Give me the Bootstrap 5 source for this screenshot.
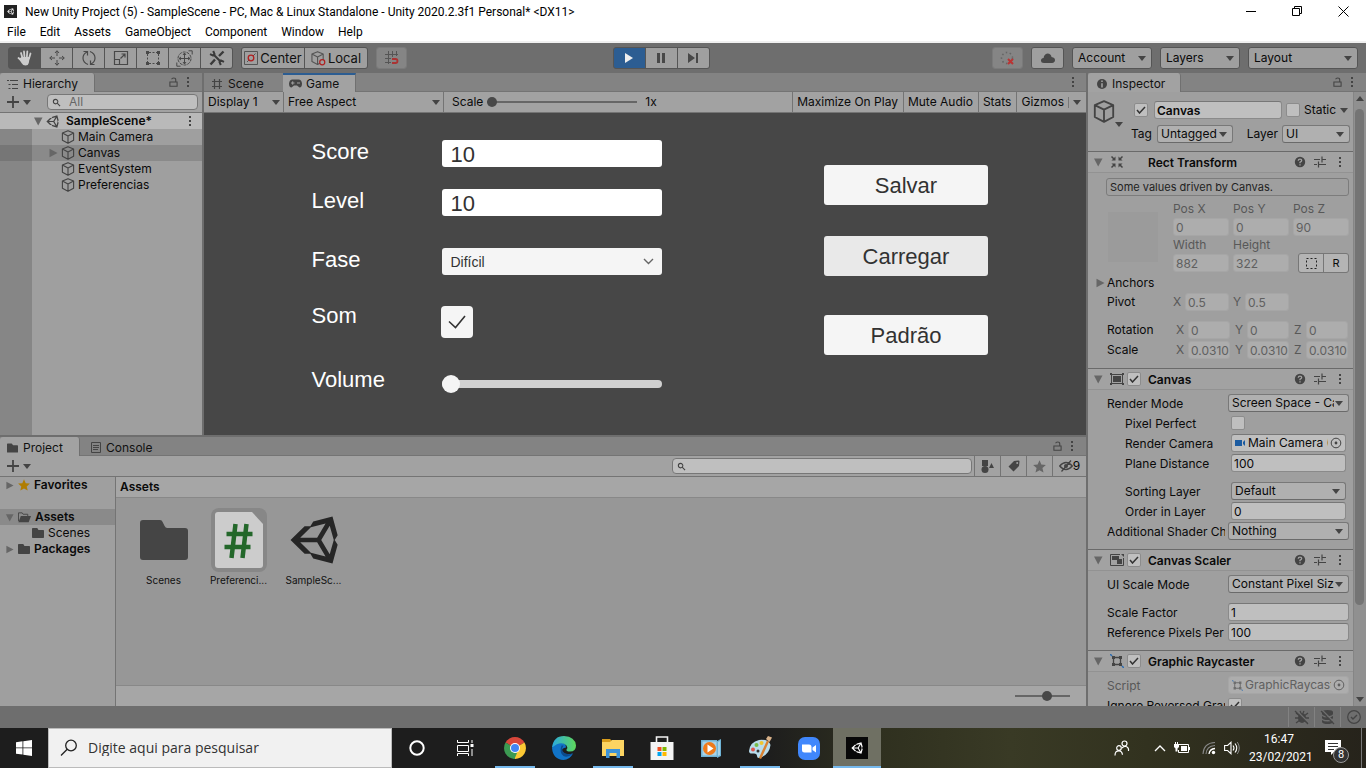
<!DOCTYPE html>
<html lang="pt-BR">
<head>
<meta charset="utf-8">
<meta name="viewport" content="width=device-width, initial-scale=1">
<title>New Unity Project (5) - SampleScene</title>
<link href="https://cdn.jsdelivr.net/npm/bootstrap@5.3.0/dist/css/bootstrap.min.css" rel="stylesheet">
<style>
  body { height: 100vh; font: 12px/16px Inter, sans-serif; color: #0a0a0a; background: #6e6e6e; }
  svg { display: block; flex: none; }
  a, a:hover { color: inherit; text-decoration: none; }
  .sys { font-family: Roboto, "Noto Sans", sans-serif; }
  .btn { --bs-btn-padding-x: 0; --bs-btn-padding-y: 0; --bs-btn-border-width: 0; --bs-btn-border-radius: 0; --bs-btn-font-size: 12px; --bs-btn-line-height: 16px; color: inherit; display: flex; align-items: center; justify-content: center; }
  .ink { color: #444; }
  .split { gap: 2px; }

  /* window frame */
  .title-bar { height: 23px; background: #fff; }
  .menu-bar { height: 20px; background: #fff; border-bottom: 2px solid #f0f0f0; gap: 14px; padding: 0 7px; }
  .frame-btn { width: 46px; height: 23px; }

  /* main toolbar */
  .tool-bar { display: grid; grid-template-columns: 1fr auto 1fr; align-items: center; height: 30px; padding: 0 8px; }
  .play-cell { padding-right: 44px; }
  .tool-set { height: 22px; border: 1px solid #555; border-radius: 3px; background: #555; gap: 1px; overflow: hidden; }
  .tool-set .btn { width: 31px; height: 20px; background: #9f9f9f; color: #484848; }
  .tool-set .btn.wide { width: 62px; color: #111; font-size: 13px; gap: 2px; }
  .tool-set .btn.on { background: #555; color: #ccc; }
  .tool-set .btn.playing { background: #2c5d92; color: #eee; }
  .tool-set.dim { border-color: #7a7a7a; }
  .tool-set.dim .btn { background: #858585; color: #666; width: 29px; opacity: 1; }
  .drop { appearance: none; color: #0a0a0a; border: 1px solid #787878; border-bottom-color: #6a6a6a; border-radius: 3px; height: 18px; width: 100%; padding: 0 14px 1px 3px; font-size: 12px; line-height: 16px; min-width: 0;
    background: #b0b0b0 url("data:image/svg+xml,%3Csvg xmlns='http://www.w3.org/2000/svg' width='8' height='5'%3E%3Cpath d='M0 0h8L4 5z' fill='%23444'/%3E%3C/svg%3E") no-repeat right 5px center; }
  .drop.bar { background-color: #9f9f9f; border-color: #555; height: 22px; padding-left: 5px; width: 80px; }
  .drop.bar.long { width: 110px; }
  .drop.flat { background-color: transparent; border: 0; padding-left: 4px; }
  .drop.display { width: 79px; background-position: right 3px center; }
  .drop.aspect { width: 159px; background-position: right 3px center; }

  /* docked panels */
  .tab-strip { height: 19px; background: #838383; border-bottom: 1px solid #747474; }
  .dock-tab { height: 19px; gap: 5px; padding: 3px 0 0 7px; color: #111; display: flex; align-items: center; }
  .dock-tab.on { background: #a2a2a2; border-radius: 3px 3px 0 0; border-right: 1px solid #707070; }
  .dock-tab.focus { border-top: 2px solid #2c5d92; border-radius: 0; padding: 1px 0 0 6px; gap: 4px; }
  .tab-hierarchy { width: 95px; }
  .tab-scene { width: 79px; }
  .tab-game { width: 73px; }
  .tab-project { width: 80px; }
  .tab-inspector { width: 93px; padding-left: 9px; }
  .strip { height: 21px; background: #a2a2a2; border-bottom: 1px solid #747474; }
  .strip.lead-in { padding-left: 7px; }
  .cell { border-left: 1px solid #747474; height: 20px; padding: 0 5px 0 4px; display: flex; align-items: center; }
  .cell.ico { width: 26px; padding: 0 3px; }
  .cell.eye { width: 34px; padding: 0 3px; }
  .rule { width: 1px; height: 11px; background: #777; }
  .hierarchy { width: 202px; background: linear-gradient(90deg, #868686 32px, #9f9f9f 32px); }
  .node { height: 16px; gap: 3px; padding-right: 8px; }
  .node.scene { background: #b9b9b9; padding-left: 33px; }
  .node.child { padding-left: 48px; }
  .node.picked { background: linear-gradient(90deg, #767676 32px, #8a8a8a 32px); }
  .find { border: 1px solid #777; border-radius: 4px; background: #bfbfbf; height: 16px; min-width: 0; overflow: hidden; }
  .find input { background: none; border: 0; outline: 0; min-width: 0; font-size: 12px; padding: 0; line-height: 14px; height: 14px; }
  .find input::placeholder { color: #666; opacity: 1; }
  .find.wide-find { width: 300px; margin-right: 2px; }
  .track { appearance: none; background: linear-gradient(#666, #666) center/100% 2px no-repeat; height: 12px; margin: 0; }
  .track::-webkit-slider-thumb { appearance: none; width: 10px; height: 10px; border-radius: 50%; background: #484848; }
  .scale-track { width: 150px; }
  .zoom-track { width: 55px; }

  /* game view */
  .game { background: #474747; font-family: "Liberation Sans", Arial, sans-serif; font-size: 22px; line-height: 24px; color: #fff; padding: 27px 0 0 8px; gap: 162px; }
  .game-form { width: 351px; display: flex; flex-direction: column; }
  .game-form label { width: 131px; flex: none; line-height: 20px; padding: 0 0 3px 1px; }
  .game-form .text { width: 220px; height: 27px; border: 0; border-radius: 3px; color: #323232; background-color: #fff; padding: 2px 9px 0; font-size: 22px; line-height: 24px; }
  .game-form select.text { appearance: none; font-size: 14px; padding: 0 9px; background: #f5f5f5 url("data:image/svg+xml,%3Csvg xmlns='http://www.w3.org/2000/svg' width='11' height='7'%3E%3Cpath d='M1 1l4.500 4.500L10 1' fill='none' stroke='%23666' stroke-width='1.400'/%3E%3C/svg%3E") no-repeat right 8px center; }
  .game-form .tick { appearance: none; width: 32px; height: 32px; margin: 0 0 0 -1px; border-radius: 4px; background: #f5f5f5; }
  .game-form .tick:checked { background: #f5f5f5 url("data:image/svg+xml,%3Csvg xmlns='http://www.w3.org/2000/svg' width='18' height='14'%3E%3Cpath d='M1 6.500l6.500 6L17 1' fill='none' stroke='%23323232' stroke-width='1.600'/%3E%3C/svg%3E") no-repeat center; }
  .volume { appearance: none; width: 220px; height: 18px; margin: 4px 0 0; background: none; }
  .volume::-webkit-slider-runnable-track { height: 8px; border-radius: 4px; background: #d0d0d0; }
  .volume::-webkit-slider-thumb { appearance: none; width: 18px; height: 18px; margin-top: -5px; border-radius: 50%; background: #f5f5f5; }
  .gap-below-22 { margin-bottom: 22px; }
  .gap-below-32 { margin-bottom: 32px; }
  .gap-below-31 { margin-bottom: 31px; }
  .gap-below-39 { margin-bottom: 39px; }
  .game-btns { width: 164px; padding-top: 25px; }
  .game-btns .btn { --bs-btn-font-size: 22px; height: 40px; background: #f5f5f5; color: #323232; border-radius: 3px; width: 100%; padding: 2px 0 0 1px; }
  .game-btns .btn.hot { background: #e9e9e9; }

  /* project panel */
  .project { height: 269px; }
  .tree { width: 115px; background: #9f9f9f; }
  .tree .node { gap: 4px; padding-left: 5px; }
  .tree .node.picked { background: #8a8a8a; }
  .tree .node.deep { padding-left: 32px; }
  .assets { background: #979797; border-left: 1px solid #747474; }
  .assets-head { height: 21px; background: #a6a6a6; border-bottom: 1px solid #888; padding-left: 4px; }
  .assets-foot { height: 21px; background: #a6a6a6; border-top: 1px solid #888; padding-right: 16px; }
  .tiles { padding: 10px; }
  .tile { width: 75px; font-size: 10px; line-height: 16px; color: #111; }
  .tile-art { height: 64px; display: flex; align-items: center; justify-content: center; }
  .tile-art.picked { background: #878787; border-radius: 8px; width: 56px; }

  /* inspector */
  .inspector { width: 278px; background: #9f9f9f; }
  .insp-body { min-width: 0; }
  .scroller { width: 13px; background: #909090; border-left: 1px solid #858585; padding: 4px 2px 4px 1px; }
  .scroller-thumb { width: 9px; height: 496px; border-radius: 5px; background: #747474; }
  .obj-head { height: 59px; padding: 9px 4px 0 5px; }
  .obj-icon { width: 30px; height: 26px; }
  .obj-head .chk.active { margin: 0 6px 0 11px; }
  .obj-head .name { width: 128px; }
  .obj-head .tag-label { width: 26px; }
  .obj-head .tag-drop { width: 76px; }
  .obj-head .layer-label { width: 49px; text-align: right; padding-right: 4px; }
  .obj-head .layer-drop { width: 68px; }
  .obj-row { margin-top: 6px; padding-left: 8px; }
  .val { width: 100%; min-width: 0; height: 18px; border: 1px solid #8a8a8a; border-top-color: #777; border-radius: 3px; background: #bfbfbf; padding: 0 0 0 2px; font-size: 12px; line-height: 16px; color: #0a0a0a; }
  .val:disabled, .val.off { background: #adadad; border-color: #a6a6a6; color: #606060; }
  .chk { appearance: none; flex: none; width: 14px; height: 14px; border: 1px solid #8c8c8c; border-radius: 2px; background: #bfbfbf; margin: 0; }
  .chk:checked { background: #bfbfbf url("data:image/svg+xml,%3Csvg xmlns='http://www.w3.org/2000/svg' width='10' height='8'%3E%3Cpath d='M1 4l2.500 3L9 1' fill='none' stroke='%23333' stroke-width='1.500'/%3E%3C/svg%3E") no-repeat center; }
  .comp-head { height: 22px; border-top: 1px solid #6a6a6a; border-bottom: 1px solid #929292; background: #a2a2a2; padding: 0 5px; gap: 3px; }
  .comp-name { font-weight: 600; width: 143px; margin-left: 4px; padding-top: 1px; }
  .comp-name.no-check { margin-left: 21px; }
  .tune { margin: 0 5px; }
  .comp-body { padding: 3px 4px 8px 19px; }
  .prop { display: grid; grid-template-columns: 121px 1fr; align-items: center; height: 20px; }
  .prop > label, .prop > span { overflow: hidden; white-space: nowrap; padding-top: 1px; width: 118px; }
  .prop.sub { padding: 0 3px 0 18px; grid-template-columns: 106px 1fr; }
  .prop.sub > label, .prop.sub > span { width: auto; }
  .prop .obj { display: flex; align-items: center; gap: 2px; padding: 0 3px 0 3px; overflow: hidden; white-space: nowrap; }
  .anchor-box { width: 50px; height: 50px; margin: 12px 15px 0 1px; background: #9b9b9b; flex: none; }
  .rect-grid { display: grid; grid-template-columns: repeat(3, 56px); grid-auto-rows: 18px; column-gap: 4px; align-items: center; }
  .rect-grid > label, .faint { color: #585858; }
  .anchors { height: 20px; padding-top: 2px; margin-left: -12px; gap: 2px; }
  .axes { display: grid; grid-template-columns: 64px repeat(3, 54px); column-gap: 5px; height: 20px; align-items: center; }
  .axes.pivot { grid-template-columns: 62px repeat(3, 56px); column-gap: 4px; }
  .axis { display: flex; gap: 3px; align-items: center; }
  .axis label { width: 9px; flex: none; color: #585858; }
  .help-box { border: 1px solid #7c7c7c; border-radius: 3px; height: 18px; font-size: 11px; padding-left: 3px; color: #222; margin: 2px 0 4px -1px; }
  .pair { border: 1px solid #777; border-radius: 3px; background: #777; height: 20px; gap: 1px; overflow: hidden; margin-left: 5px; }
  .pair .btn { background: #b4b4b4; flex: 1; font-size: 11px; }

  /* status bar and taskbar */
  .status { height: 22px; color: #444; }
  .status-cell { width: 26px; height: 20px; border-left: 1px solid #828282; display: flex; align-items: center; justify-content: center; }
  .task-bar { height: 40px; color: #fff; background: linear-gradient(90deg, #1d1d1d 56%, #2f301f 64%, #393a25 74%, #32321f 84%, #26231b); }
  .task-find { width: 344px; background: #f1f1f1; border: 1px solid #bbb; padding-left: 11px; gap: 10px; }
  .task-find input { border: 0; outline: 0; background: none; font-family: "Open Sans", "Noto Sans", sans-serif; font-size: 14px; flex: 1; padding: 0; }
  .task-find input::placeholder { color: #333; opacity: 1; }
  .task { width: 49px; height: 40px; color: #fff; }
  .task.slim { width: 48px; }
  .task.run { background: linear-gradient(#76b9ed, #76b9ed) center bottom/40px 2px no-repeat; }
  .task.front { background: #6f7063; border-bottom: 2px solid #76b9ed; width: 48px; padding-top: 2px; }
  .tray { gap: 8px; }
  .clock { font-size: 12px; line-height: 18px; width: 60px; }
  .notes { margin-right: 12px; }
  .show-desk { width: 5px; height: 40px; border-left: 1px solid #777; }
  .note-count { position: absolute; right: -8px; bottom: -7px; width: 16px; height: 16px; border: 1px solid #999; border-radius: 50%; background: #333; font-size: 11px; line-height: 14px; text-align: center; }
</style>
</head>
<body class="d-flex flex-column overflow-hidden">

<svg class="d-none" aria-hidden="true">
  <symbol id="unity" viewBox="0 0 512 512"><path fill="currentColor" d="M498.110 206.400 445.310 14.720 248.200 66.080 219 116.140l-59.200-.430L15.540 256l144.280 140.320 59.170-.430 29.240 50 197.080 51.360 52.800-191.620-30-49.630ZM223.770 124.200 374.550 86.510 288 232.330H114.870Zm0 263.630L114.870 279.710H288l86.550 145.810Zm193 14L330.170 256l86.580-145.840L458.560 256Z"/></symbol>
  <symbol id="cube" viewBox="1 1 14 15"><path fill="none" stroke="currentColor" stroke-width="1.200" stroke-linejoin="round" d="M8 1.700 14 4.300v7.800l-6 3.200-6-3.200V4.300zM2 4.300l6 3 6-3M8 7.300v8"/></symbol>
  <symbol id="folder" viewBox="0 0 48 40"><path fill="currentColor" d="M3 0h17q2 0 2.600 2l2 4q1 2 2.500 2H45q3 0 3 3v26q0 3-3 3H3q-3 0-3-3V3q0-3 3-3z"/></symbol>
  <symbol id="lock" viewBox="0 0 10 11"><path fill="none" stroke="currentColor" stroke-width="1.200" d="M1 5.500h8v4.800H1zM7.500 5.500V3q0-2-2.200-2T3 2.500"/></symbol>
  <symbol id="kebab" viewBox="0 0 4 12"><path fill="currentColor" d="M1 1h2v2H1zM1 5h2v2H1zM1 9h2v2H1z"/></symbol>
  <symbol id="down" viewBox="0 0 8 5"><path fill="currentColor" d="M0 0h8L4 5z"/></symbol>
  <symbol id="open" viewBox="0 0 10 10"><path fill="#666" d="M1 1.500h8.500L5.200 9.500z"/></symbol>
  <symbol id="shut" viewBox="0 0 10 10"><path fill="#666" d="M1.500.800v8.400L9.500 5z"/></symbol>
  <symbol id="plus" viewBox="0 0 12 12"><path stroke="currentColor" stroke-width="1.800" d="M6 0v12M0 6h12"/></symbol>
  <symbol id="lens" viewBox="0 0 10 10"><path fill="none" stroke="currentColor" stroke-width="1.200" d="M6.500 4A2.500 2.500 0 1 1 1.500 4a2.500 2.500 0 0 1 5 0zM6 6l3 3"/></symbol>
  <symbol id="star" viewBox="0 0 12 12"><path fill="currentColor" d="m6 .300 1.700 3.900 4.200.400-3.200 2.800 1 4.200L6 9.400l-3.700 2.200 1-4.200L.1 4.600l4.200-.4z"/></symbol>
  <symbol id="help" viewBox="0 0 12 12"><circle cx="6" cy="6" r="5.200" fill="currentColor"/><path fill="none" stroke="#a2a2a2" stroke-width="1.300" d="M4.200 4.700Q4.300 3.200 6 3.200t1.700 1.400Q7.700 5.600 6 6.300v.9M6 8.200v1.400"/></symbol>
  <symbol id="tune" viewBox="0 0 12 12"><path stroke="currentColor" stroke-width="1.200" d="M0 3.500h6M8 3.500h4M8 .5v6M0 8.500h3M5 8.500h7M4.500 5.500v6"/></symbol>
  <symbol id="target" viewBox="0 0 12 12"><circle cx="6" cy="6" r="4.800" fill="none" stroke="currentColor"/><circle cx="6" cy="6" r="1.400" fill="currentColor"/></symbol>
  <symbol id="caster" viewBox="0 0 14 14"><path fill="none" stroke="#444" stroke-width="1.300" d="M3.500 3.500h7v7h-7z"/><path fill="#444" d="M2 2h3v3H2zM9 2h3v3H9zM2 9h3v3H2zM9 9h3v3H9z"/><path stroke="#2c6cb0" stroke-width="1.500" d="M0 0l2 2M12 12l2 2"/></symbol>
</svg>

<header class="flex-shrink-0">
  <div class="title-bar sys d-flex align-items-center">
    <svg class="ms-1" width="13" height="13" viewBox="0 0 13 13"><path fill="#222" d="M0 0h13v13H0z"/><use href="#unity" x="3" y="3" width="7" height="7" color="#fff"/></svg>
    <span class="ms-1 ps-1 text-black text-nowrap flex-grow-1">New Unity Project (5) - SampleScene - PC, Mac &amp; Linux Standalone - Unity 2020.2.3f1 Personal* &lt;DX11&gt;</span>
    <button class="btn frame-btn" aria-label="Minimize"><svg width="10" height="10"><path stroke="#000" d="M0 4.500h10"/></svg></button>
    <button class="btn frame-btn" aria-label="Restore"><svg width="11" height="11"><path fill="none" stroke="#000" d="M.5 2.500h7v7h-7zM2.500 2.500v-2h7v7h-2"/></svg></button>
    <button class="btn frame-btn" aria-label="Close"><svg width="11" height="11"><path stroke="#000" d="m.5.5 10 10m0-10-10 10"/></svg></button>
  </div>
  <nav class="menu-bar sys d-flex align-items-center text-black">
    <a href="#">File</a><a href="#">Edit</a><a href="#">Assets</a><a href="#">GameObject</a><a href="#">Component</a><a href="#">Window</a><a href="#">Help</a>
  </nav>
  <div class="tool-bar">
    <div class="d-flex align-items-center">
      <div class="tool-set d-flex">
        <button class="btn on" aria-label="Hand"><svg width="16" height="16" viewBox="0 0 16 16"><path fill="none" stroke="currentColor" stroke-width="1.800" stroke-linecap="round" d="M5.500 8 4 3M7.500 7.500 7 1.500M9.800 7.500l.5-6M12 8.500l1.500-5M5 11 1.500 8"/><path fill="currentColor" d="M4.500 7h8.300l-1 6q-.5 2.500-3.300 2.500-2.500 0-4-2.500L2 9z"/></svg></button>
        <button class="btn" aria-label="Move"><svg width="16" height="16" viewBox="0 0 16 16"><path fill="none" stroke="currentColor" d="M8 1v5M8 10v5M1 8h5M10 8h5M6 3l2-2.300L10 3M6 13l2 2.300L10 13M3 6 .7 8 3 10M13 6l2.300 2L13 10"/></svg></button>
        <button class="btn" aria-label="Rotate"><svg width="16" height="16" viewBox="0 0 16 16"><path fill="none" stroke="currentColor" stroke-width="1.200" d="M7 14.500Q2 12.500 2 8q0-4 4-6M2.500 1.500h4v4M9 1.500q5 2 5 6.500 0 4-4 6M13.500 14.500h-4v-4"/></svg></button>
        <button class="btn" aria-label="Scale"><svg width="16" height="16" viewBox="0 0 16 16"><path fill="none" stroke="currentColor" stroke-width="1.200" d="M1.500 1.500h13v13h-13zM1.500 9.500h5v5M7.500 8.500 12 4M8.500 4H12v3.500"/></svg></button>
        <button class="btn" aria-label="Rect"><svg width="16" height="16" viewBox="0 0 16 16"><path stroke="currentColor" stroke-dasharray="2 1.500" d="M4 2.500h8M4 13.500h8M2.500 4v8M13.500 4v8"/><path fill="currentColor" d="M1 1h3v3H1zM12 1h3v3h-3zM1 12h3v3H1zM12 12h3v3h-3z"/></svg></button>
        <button class="btn" aria-label="Transform"><svg width="17" height="17" viewBox="0 0 17 17"><circle cx="8.500" cy="8.500" r="6.500" fill="none" stroke="currentColor" stroke-dasharray="3 1"/><path fill="none" stroke="currentColor" d="M8.500 3v11M3 8.500h11M7 5l1.500-2L10 5M7 12l1.500 2 1.500-2M5 7 3 8.500 5 10M12 7l2 1.500L12 10M12.500.8h3.700v3.700M4.500 16.200H.8v-3.700"/></svg></button>
        <button class="btn" aria-label="Custom tools"><svg width="16" height="16" viewBox="0 0 16 16"><path fill="none" stroke="#3a3a3a" stroke-width="2.400" d="m1.500 14.500 4.500-5M10 6l4.500-4.500"/><path fill="none" stroke="#3a3a3a" stroke-width="2" d="M4.500 4.500l7.500 7.500M1 4.200l3 1.300 1.500-1.500L4.200 1M15 11.800l-3-1.300-1.500 1.500 1.300 3"/></svg></button>
      </div>
      <div class="tool-set d-flex ms-2">
        <button class="btn wide"><svg width="14" height="14" viewBox="0 0 14 14"><path fill="none" stroke="#555" d="M.5.500h13v13H.5zM3 11l2-2M9 5l2.500-2.500"/><circle cx="7" cy="7" r="2.800" fill="none" stroke="#b02020" stroke-width="1.300"/></svg>Center</button>
        <button class="btn wide"><svg width="15" height="15" viewBox="0 0 16 16"><use href="#cube" width="14" height="15" color="#555"/><circle cx="12" cy="12" r="2.700" fill="#9f9f9f" stroke="#b02020" stroke-width="1.300"/></svg>Local</button>
      </div>
      <div class="tool-set dim d-flex ms-2"><button class="btn" aria-label="Snap" disabled><svg width="16" height="16" viewBox="0 0 16 16"><path fill="none" stroke="#555" d="M4.500 1v13M8.500 1v6M12.500 1v5M1 4.500h13M1 8.500h6M1 12.500h6"/><path fill="none" stroke="#a33" stroke-width="1.800" d="M8 9h3.500q2 0 2 2t-2 2H8"/></svg></button></div>
    </div>
    <div class="play-cell"><div class="tool-set d-flex">
      <button class="btn playing" aria-label="Play"><svg width="10" height="12"><path fill="currentColor" d="M1 1v10l8-5z"/></svg></button>
      <button class="btn" aria-label="Pause"><svg width="10" height="12"><path fill="currentColor" d="M1 1h3v10H1zM6 1h3v10H6z"/></svg></button>
      <button class="btn" aria-label="Step"><svg width="12" height="12"><path fill="currentColor" d="M1 1v10l7-5zM9 1h2v10H9z"/></svg></button>
    </div></div>
    <div class="d-flex align-items-center justify-content-end gap-2">
      <div class="tool-set dim d-flex"><button class="btn" aria-label="Progress" disabled><svg width="16" height="14" viewBox="0 0 16 14"><circle cx="7" cy="7" r="5.500" fill="none" stroke="#666" stroke-width="1.600" stroke-dasharray="1.500 2.500"/><path stroke="#b33" stroke-width="2" d="m8 8 5 5m0-5-5 5"/></svg></button></div>
      <div class="tool-set d-flex"><button class="btn" aria-label="Services"><svg width="16" height="12" viewBox="0 0 16 12"><path fill="currentColor" d="M4 11Q1 11 1 8.500T3.600 6Q4 2 7.500 1.500q3.500 0 4 3.500Q15 5.500 15 8t-3 3z"/></svg></button></div>
      <select class="drop bar" aria-label="Account"><option>Account</option></select>
      <select class="drop bar" aria-label="Layers"><option>Layers</option></select>
      <select class="drop bar long" aria-label="Layout"><option>Layout</option></select>
    </div>
  </div>
</header>

<main class="split d-flex flex-grow-1 overflow-hidden">
  <div class="split d-flex flex-column flex-grow-1 overflow-hidden">
    <div class="split d-flex flex-grow-1 overflow-hidden">

      <section class="hierarchy flex-shrink-0">
        <div class="tab-strip d-flex align-items-center">
          <a href="#" class="dock-tab on tab-hierarchy"><svg class="ink" width="11" height="10"><path stroke="currentColor" d="M0 1.500h2M3 1.500h8M1.500 5.500h2M5 5.500h6M1.500 9.500h2M5 9.500h6"/></svg>Hierarchy</a>
          <svg class="ink ms-auto" width="9" height="10"><use href="#lock"/></svg>
          <svg class="ink ms-1 me-2" width="12" height="12"><use href="#kebab"/></svg>
        </div>
        <div class="strip lead-in d-flex align-items-center">
          <svg class="ink" width="12" height="12"><use href="#plus"/></svg><svg class="ink ms-1" width="8" height="5"><use href="#down"/></svg>
          <div class="find d-flex align-items-center flex-grow-1 ms-2 me-1 ps-1 ms-3"><svg class="ink me-2" width="9" height="9"><use href="#lens"/></svg><input type="text" class="flex-grow-1" placeholder="All" aria-label="Search hierarchy"></div>
        </div>
        <div class="node scene d-flex align-items-center fw-semibold"><svg width="10" height="10"><use href="#open"/></svg><svg class="ink" width="13" height="13"><use href="#unity"/></svg><span class="ps-1">SampleScene*</span><svg class="ink ms-auto" width="8" height="12"><use href="#kebab"/></svg></div>
        <div class="node child d-flex align-items-center"><svg width="10" height="10"></svg><svg class="ink" width="14" height="14"><use href="#cube"/></svg>Main Camera</div>
        <div class="node child picked d-flex align-items-center"><svg width="10" height="10"><use href="#shut"/></svg><svg class="ink" width="14" height="14"><use href="#cube"/></svg>Canvas</div>
        <div class="node child d-flex align-items-center"><svg width="10" height="10"></svg><svg class="ink" width="14" height="14"><use href="#cube"/></svg>EventSystem</div>
        <div class="node child d-flex align-items-center"><svg width="10" height="10"></svg><svg class="ink" width="14" height="14"><use href="#cube"/></svg>Preferencias</div>
      </section>

      <section class="d-flex flex-column flex-grow-1 overflow-hidden">
        <div class="tab-strip d-flex align-items-center">
          <a href="#" class="dock-tab tab-scene"><svg class="ink" width="12" height="12"><path stroke="currentColor" stroke-width="1.200" d="M3.500 1v10M8.500 1v10M1 3.500h10M1 8.500h10"/></svg>Scene</a>
          <a href="#" class="dock-tab on focus tab-game"><svg class="ink" width="13" height="9" viewBox="0 0 13 9"><path fill="currentColor" d="M3.500.500h6q3 0 3.500 4 0 4-2.500 4L8 6.500H5L2.500 8.500Q0 8.500 0 4.500.5.500 3.500.500z"/><path stroke="#a2a2a2" d="M2 4h3.500M3.700 2.300v3.400M8 4h3"/></svg>Game</a>
          <svg class="ink ms-auto me-2" width="10" height="12"><use href="#kebab"/></svg>
        </div>
        <div class="strip d-flex align-items-center">
          <select class="drop flat display" aria-label="Display"><option>Display 1</option></select>
          <div class="cell p-0"><select class="drop flat aspect" aria-label="Aspect"><option>Free Aspect</option></select></div>
          <div class="cell ps-2 flex-grow-1"><label for="scale">Scale</label><input id="scale" type="range" class="track scale-track mx-1" value="0"><span class="ms-1">1x</span></div>
          <button class="btn cell">Maximize On Play</button><button class="btn cell">Mute Audio</button><button class="btn cell">Stats</button><button class="btn cell">Gizmos<span class="rule mx-1"></span><svg class="ink" width="8" height="5"><use href="#down"/></svg></button>
        </div>
        <div class="game d-flex justify-content-center flex-grow-1 overflow-hidden">
          <form class="game-form">
            <div class="d-flex align-items-center gap-below-22"><label for="score">Score</label><input id="score" class="text" value="10"></div>
            <div class="d-flex align-items-center gap-below-32"><label for="level">Level</label><input id="level" class="text" value="10"></div>
            <div class="d-flex align-items-center gap-below-31"><label for="fase">Fase</label><select id="fase" class="text"><option>Difícil</option></select></div>
            <div class="d-flex gap-below-32"><label for="som">Som</label><input id="som" type="checkbox" class="tick" checked></div>
            <div class="d-flex align-items-center"><label for="vol">Volume</label><input id="vol" type="range" class="volume" value="0"></div>
          </form>
          <div class="game-btns">
            <button class="btn gap-below-31">Salvar</button>
            <button class="btn hot gap-below-39">Carregar</button>
            <button class="btn">Padrão</button>
          </div>
        </div>
      </section>
    </div>

    <section class="project d-flex flex-column flex-shrink-0">
      <div class="tab-strip d-flex align-items-center">
        <a href="#" class="dock-tab on tab-project"><svg class="ink" width="11" height="10"><use href="#folder"/></svg>Project</a>
        <a href="#" class="dock-tab ms-1"><svg class="ink" width="10" height="11"><path fill="none" stroke="currentColor" d="M.5.500h9v10h-9zM2 3.500h6M2 5.500h6M2 7.500h5"/></svg>Console</a>
        <svg class="ink ms-auto" width="9" height="10"><use href="#lock"/></svg>
        <svg class="ink ms-1 me-2" width="12" height="12"><use href="#kebab"/></svg>
      </div>
      <div class="strip lead-in d-flex align-items-center">
        <svg class="ink" width="12" height="12"><use href="#plus"/></svg><svg class="ink ms-1" width="8" height="5"><use href="#down"/></svg>
        <div class="find wide-find d-flex align-items-center ms-auto ps-1"><svg class="ink" width="9" height="9"><use href="#lens"/></svg><input type="text" class="flex-grow-1" aria-label="Search assets"></div>
        <button class="btn cell ico ink" aria-label="Type"><svg width="13" height="13"><path fill="currentColor" d="M1 0h6v6H1zM8 8l2.500-5L13 8z"/><circle cx="4" cy="9.500" r="3.500" fill="currentColor"/></svg></button>
        <button class="btn cell ico ink" aria-label="Label"><svg width="12" height="12"><path fill="currentColor" fill-rule="evenodd" d="M6 1l4.500-.5q1 0 1 1L11 6l-5.500 5.500L.5 6.500zM8.200 3a1 1 0 1 0 2 0 1 1 0 1 0-2 0z"/></svg></button>
        <button class="btn cell ico" aria-label="Favorite"><svg width="13" height="13" color="#666"><use href="#star"/></svg></button>
        <button class="btn cell eye"><svg class="ink" width="14" height="12" viewBox="0 0 14 12"><path fill="none" stroke="currentColor" stroke-width="1.300" d="M.7 6Q7-1 13.300 6 7 13 .7 6zM12 .5 2.500 11.500"/><circle cx="7" cy="6" r="2" fill="currentColor"/></svg>9</button>
      </div>
      <div class="d-flex flex-grow-1 overflow-hidden">
        <div class="tree flex-shrink-0">
          <div class="node d-flex align-items-center fw-semibold"><svg width="9" height="9"><use href="#shut"/></svg><svg width="12" height="12" color="#b07d00"><use href="#star"/></svg>Favorites</div>
          <div class="node picked d-flex align-items-center fw-semibold mt-3"><svg width="9" height="9"><use href="#open"/></svg><svg class="ink" width="13" height="11" viewBox="0 0 14 11"><path fill="none" stroke="currentColor" d="M.5 9.500v-9h4l1 1.500h5v2"/><path fill="currentColor" d="M3 4h11l-2.500 6.500H.5z"/></svg>Assets</div>
          <div class="node deep d-flex align-items-center"><svg class="ink" width="12" height="10"><use href="#folder"/></svg>Scenes</div>
          <div class="node d-flex align-items-center fw-semibold"><svg width="9" height="9"><use href="#shut"/></svg><svg class="ink" width="12" height="10"><use href="#folder"/></svg>Packages</div>
        </div>
        <div class="assets d-flex flex-column flex-grow-1">
          <div class="assets-head d-flex align-items-center fw-semibold">Assets</div>
          <div class="tiles d-flex flex-grow-1">
            <div class="tile text-center"><div class="tile-art"><svg color="#454545" width="48" height="40"><use href="#folder"/></svg></div>Scenes</div>
            <div class="tile text-center"><div class="tile-art picked mx-auto"><svg width="48" height="56" viewBox="0 0 48 56"><path fill="#ccc" d="M3 0h34l11 12v41q0 3-3 3H3q-3 0-3-3V3q0-3 3-3z"/><path fill="none" stroke="#23672a" stroke-width="4.500" d="M20.500 12 16.500 46M31.500 12l-4 34M11.500 22h26M9.500 35h26"/></svg></div>Preferenci...</div>
            <div class="tile text-center"><div class="tile-art"><svg color="#262626" width="50" height="50"><use href="#unity"/></svg></div>SampleSc...</div>
          </div>
          <div class="assets-foot d-flex align-items-center justify-content-end"><input type="range" class="track zoom-track" value="60" aria-label="Icon size"></div>
        </div>
      </div>
    </section>
  </div>

  <aside class="inspector d-flex flex-column flex-shrink-0">
    <div class="tab-strip d-flex align-items-center">
      <a href="#" class="dock-tab on tab-inspector"><svg class="ink" width="10" height="10"><circle cx="5" cy="5" r="5" fill="currentColor"/><path stroke="#a2a2a2" stroke-width="1.600" d="M5 1.500v1.500M5 4.200V8.500"/></svg>Inspector</a>
      <svg class="ink ms-auto" width="9" height="10"><use href="#lock"/></svg>
      <svg class="ink ms-1 me-2" width="12" height="12"><use href="#kebab"/></svg>
    </div>
    <div class="d-flex flex-grow-1 overflow-hidden">
      <div class="insp-body flex-grow-1 overflow-hidden">
        <div class="obj-head d-flex">
          <div class="obj-icon d-flex align-items-end"><svg class="ink mb-1" width="22" height="23"><use href="#cube"/></svg><svg class="ink" width="8" height="5"><use href="#down"/></svg></div>
          <div class="flex-grow-1">
            <div class="d-flex align-items-center">
              <input type="checkbox" class="chk active" checked aria-label="Active"><input class="val name fw-semibold" value="Canvas" aria-label="Name">
              <input id="static" type="checkbox" class="chk mx-1"><label for="static">Static</label><svg class="ink ms-1" width="8" height="5"><use href="#down"/></svg>
            </div>
            <div class="obj-row d-flex align-items-center">
              <label for="tag" class="tag-label">Tag</label><select id="tag" class="drop tag-drop"><option>Untagged</option></select>
              <label for="layer" class="layer-label">Layer</label><select id="layer" class="drop layer-drop"><option>UI</option></select>
            </div>
          </div>
        </div>

        <div class="comp-head d-flex align-items-center"><svg width="10" height="10"><use href="#open"/></svg><svg class="ink ms-1" width="14" height="14" viewBox="0 0 14 14"><path fill="none" stroke="currentColor" stroke-width="1.500" d="M1.500 1.500 4 4M12.500 1.500 10 4M1.500 12.500 4 10M12.500 12.500 10 10"/><path fill="currentColor" d="M5.500 1.500v4h-4zM8.500 1.500v4h4zM5.500 12.500v-4h-4zM8.500 12.500v-4h4z"/></svg><span class="comp-name no-check">Rect Transform</span><svg class="ink" width="12" height="12"><use href="#help"/></svg><svg class="ink tune" width="12" height="12"><use href="#tune"/></svg><svg class="ink" width="12" height="12"><use href="#kebab"/></svg></div>
        <div class="comp-body">
          <div class="help-box">Some values driven by Canvas.</div>
          <div class="d-flex">
            <div class="anchor-box"></div>
            <div class="rect-grid">
              <label for="px">Pos X</label><label for="py">Pos Y</label><label for="pz">Pos Z</label>
              <input id="px" class="val" value="0" disabled><input id="py" class="val" value="0" disabled><input id="pz" class="val" value="90" disabled>
              <label for="w">Width</label><label for="h">Height</label><span></span>
              <input id="w" class="val" value="882" disabled><input id="h" class="val" value="322" disabled><div class="pair d-flex"><button class="btn" aria-label="Blueprint mode"><svg width="11" height="11"><path fill="none" stroke="#222" stroke-dasharray="2 2" d="M.5.500h10v10H.5z"/></svg></button><button class="btn">R</button></div>
            </div>
          </div>
          <div class="anchors d-flex align-items-center"><svg width="10" height="10"><use href="#shut"/></svg>Anchors</div>
          <div class="axes pivot"><span>Pivot</span><div class="axis"><label for="vx">X</label><input id="vx" class="val" value="0.5" disabled></div><div class="axis"><label for="vy">Y</label><input id="vy" class="val" value="0.5" disabled></div></div>
          <div class="axes mt-2"><span>Rotation</span><div class="axis"><label for="rx">X</label><input id="rx" class="val" value="0" disabled></div><div class="axis"><label for="ry">Y</label><input id="ry" class="val" value="0" disabled></div><div class="axis"><label for="rz">Z</label><input id="rz" class="val" value="0" disabled></div></div>
          <div class="axes"><span>Scale</span><div class="axis"><label for="sx">X</label><input id="sx" class="val" value="0.03105" disabled></div><div class="axis"><label for="sy">Y</label><input id="sy" class="val" value="0.03105" disabled></div><div class="axis"><label for="sz">Z</label><input id="sz" class="val" value="0.03105" disabled></div></div>
        </div>

        <div class="comp-head d-flex align-items-center"><svg width="10" height="10"><use href="#open"/></svg><svg class="ink ms-1" width="14" height="12"><path fill="none" stroke="currentColor" d="M1.500 1.500h11v9h-11z"/><path fill="currentColor" d="M3 3h8v6H3zM0 0h2v2H0zM12 0h2v2h-2zM0 10h2v2H0zM12 10h2v2h-2z"/></svg><input type="checkbox" class="chk" checked aria-label="Canvas enabled"><span class="comp-name">Canvas</span><svg class="ink" width="12" height="12"><use href="#help"/></svg><svg class="ink tune" width="12" height="12"><use href="#tune"/></svg><svg class="ink" width="12" height="12"><use href="#kebab"/></svg></div>
        <div class="comp-body">
          <div class="prop"><label for="rm">Render Mode</label><select id="rm" class="drop"><option>Screen Space - Camera</option></select></div>
          <div class="prop sub"><label for="pp">Pixel Perfect</label><input id="pp" type="checkbox" class="chk"></div>
          <div class="prop sub"><span>Render Camera</span><div class="val obj"><svg width="11" height="8"><path fill="#1c5ba0" d="M0 1h7v6H0zM8 3l2-2v6L8 5z"/></svg><span class="overflow-hidden flex-grow-1">Main Camera (Camera)</span><svg class="ink" width="12" height="12"><use href="#target"/></svg></div></div>
          <div class="prop sub"><label for="pd">Plane Distance</label><input id="pd" class="val" value="100"></div>
          <div class="prop sub mt-2"><label for="sl">Sorting Layer</label><select id="sl" class="drop"><option>Default</option></select></div>
          <div class="prop sub"><label for="ol">Order in Layer</label><input id="ol" class="val" value="0"></div>
          <div class="prop"><label for="as">Additional Shader Channels</label><select id="as" class="drop"><option>Nothing</option></select></div>
        </div>

        <div class="comp-head d-flex align-items-center"><svg width="10" height="10"><use href="#open"/></svg><svg class="ink ms-1" width="14" height="12"><path fill="none" stroke="currentColor" d="M10 .500H.5v11h13V4"/><path fill="currentColor" d="M2 2h7v3h3v5H7V6H2zM11 0h3v3z"/></svg><input type="checkbox" class="chk" checked aria-label="Canvas Scaler enabled"><span class="comp-name">Canvas Scaler</span><svg class="ink" width="12" height="12"><use href="#help"/></svg><svg class="ink tune" width="12" height="12"><use href="#tune"/></svg><svg class="ink" width="12" height="12"><use href="#kebab"/></svg></div>
        <div class="comp-body">
          <div class="prop"><label for="us">UI Scale Mode</label><select id="us" class="drop"><option>Constant Pixel Size</option></select></div>
          <div class="prop mt-2"><label for="sf">Scale Factor</label><input id="sf" class="val" value="1"></div>
          <div class="prop"><label for="rp">Reference Pixels Per Unit</label><input id="rp" class="val" value="100"></div>
        </div>

        <div class="comp-head d-flex align-items-center"><svg width="10" height="10"><use href="#open"/></svg><svg class="ms-1" width="14" height="14"><use href="#caster"/></svg><input type="checkbox" class="chk" checked aria-label="Graphic Raycaster enabled"><span class="comp-name">Graphic Raycaster</span><svg class="ink" width="12" height="12"><use href="#help"/></svg><svg class="ink tune" width="12" height="12"><use href="#tune"/></svg><svg class="ink" width="12" height="12"><use href="#kebab"/></svg></div>
        <div class="comp-body">
          <div class="prop faint"><span>Script</span><div class="val off obj"><svg width="11" height="11" viewBox="0 0 14 14" opacity=".6"><use href="#caster"/></svg><span class="overflow-hidden flex-grow-1">GraphicRaycaster</span><svg width="12" height="12"><use href="#target"/></svg></div></div>
          <div class="prop"><label for="ir">Ignore Reversed Graphics</label><input id="ir" type="checkbox" class="chk" checked></div>
        </div>
      </div>
      <div class="scroller d-flex flex-column align-items-center"><svg class="ink" width="8" height="5"><path fill="currentColor" d="M0 5h8L4 0z"/></svg><div class="scroller-thumb mt-2 flex-shrink-1"></div><svg class="ink mt-auto" width="8" height="5"><use href="#down"/></svg></div>
    </div>
  </aside>
</main>

<div class="status d-flex justify-content-end align-items-center flex-shrink-0">
  <div class="status-cell"><svg width="16" height="16" viewBox="0 0 16 16"><ellipse cx="8" cy="9" rx="4" ry="5" fill="currentColor"/><path fill="none" stroke="currentColor" stroke-width="1.300" d="M1 9h14M2 4l4 3M14 4l-4 3M2 14l4-3M14 14l-4-3M6 2l1 2M10 2 9 4"/><path stroke="#6e6e6e" stroke-width="1.500" d="m2 1 13 13"/><path stroke="currentColor" stroke-width="1.300" d="m1 2 13 13"/></svg></div>
  <div class="status-cell"><svg width="15" height="16" viewBox="0 0 15 16"><path fill="currentColor" d="M2 3q0-2 5.500-2T13 3v2q-1 2-5.500 2T2 5zM2 7q2 1.500 5.500 1.500T13 7v2q-1 2-5.500 2T2 9zM2 11q2 1.500 5.500 1.500T13 11v2q-1 2-5.500 2T2 13z"/><path stroke="#6e6e6e" stroke-width="1.500" d="m2 1 13 13"/><path stroke="currentColor" stroke-width="1.300" d="m1 2 13 13"/></svg></div>
  <div class="status-cell"><svg width="14" height="14" viewBox="0 0 14 14"><circle cx="7" cy="7" r="6.300" fill="none" stroke="currentColor" stroke-width="1.200"/><path fill="none" stroke="currentColor" stroke-width="1.400" d="m4 7 2 2 4-4"/></svg></div>
</div>

<footer class="task-bar sys d-flex align-items-center flex-shrink-0">
  <button class="btn task slim" aria-label="Iniciar"><svg width="16" height="16"><path fill="#fff" d="M0 2.200 6.500 1.300V7.500H0zM7.300 1.200 16 0v7.500H7.300zM0 8.300h6.500v6.300L0 13.700zM7.300 8.300H16V16l-8.700-1.200z"/></svg></button>
  <div class="task-find d-flex align-items-center align-self-stretch"><svg width="18" height="18"><circle cx="11" cy="6.500" r="5.300" fill="none" stroke="#222" stroke-width="1.300"/><path stroke="#222" stroke-width="1.300" d="M7.200 10.200 1 16.500"/></svg><input type="text" placeholder="Digite aqui para pesquisar" aria-label="Pesquisar"></div>
  <button class="btn task" aria-label="Cortana"><svg width="16" height="16"><circle cx="8" cy="8" r="6.700" fill="none" stroke="#fff" stroke-width="2"/></svg></button>
  <button class="btn task" aria-label="Visão de tarefas"><svg width="17" height="16"><path fill="none" stroke="#fff" d="M.5 0v2.500h11V0M.5 5.500h11v6H.5zM.5 16v-2.500h11V16M15 0v3M15 9v7"/><path fill="#fff" d="M13.500 4h3v3h-3z"/></svg></button>
  <button class="btn task run" aria-label="Chrome"><svg width="22" height="22" viewBox="0 0 22 22"><path fill="#d8473b" d="M11 11 1.500 5.500a11 11 0 0 1 19 0z"/><path fill="#fcc934" d="M11 11l9.500-5.500a11 11 0 0 1-9.500 16.500z"/><path fill="#3c9a52" d="M11 11 11 22A11 11 0 0 1 1.500 5.500z"/><path fill="#3c9a52" d="M6 12l7 4-2.500 6-4-2z"/><circle cx="11" cy="11" r="5" fill="#fff"/><circle cx="11" cy="11" r="4" fill="#4285f4"/></svg></button>
  <button class="btn task" aria-label="Edge"><svg width="24" height="24" viewBox="0 0 24 24"><defs><linearGradient id="eg"><stop stop-color="#2aa9e0"/><stop offset="1" stop-color="#5fd85a"/></linearGradient></defs><path fill="#1173c7" d="M0 12Q2 6 9 6.500q5 .5 5 5Q9.500 12 10 15q2 4.500 11 2.500Q17.500 24 11.500 24 1 23.500 0 12z"/><path fill="url(#eg)" d="M0 11.500Q1.500 0 12 0q11 .5 12 9.500 0 6-6 6-4 0-3.500-2 1.500-2 0-4Q9 4 0 11.500z"/><path fill="#0c4a8c" d="M9.500 9.500q-2.500 7 2 10.500 4 2.500 9.500-2.500-5 1.500-8.500-.5-4-3-1-7.500z"/></svg></button>
  <button class="btn task run" aria-label="Explorador"><svg width="22" height="19" viewBox="0 0 22 19"><path fill="#d99d1c" d="M0 0h8l2 2v5H0z"/><path fill="#fcd462" d="M0 3h8l2-2h12v16H0z"/><path fill="#3d93d8" d="M4 10h14v9h-3.500v-5h-7v5H4z"/></svg></button>
  <button class="btn task" aria-label="Store"><svg width="24" height="24" viewBox="0 0 24 24"><path fill="none" stroke="#f2f2f2" stroke-width="1.600" d="M6.500 7V1h11v6"/><path fill="#f4f4f4" d="M.5 6h23v18H.5z"/><path fill="#f25022" d="M7.500 11h4v4h-4z"/><path fill="#7fba00" d="M12.500 11h4v4h-4z"/><path fill="#00a4ef" d="M7.500 16h4v4h-4z"/><path fill="#ffb900" d="M12.500 16h4v4h-4z"/></svg></button>
  <button class="btn task" aria-label="Media Player"><svg width="20" height="19" viewBox="0 0 20 19"><path fill="#6fb3d6" d="M0 1h16v17H0zM16 2l4-2v17l-4 2z"/><path fill="#a9d3e8" d="M1.500 2.500h14v14h-14zM17 3l2-1v14l-2 1z"/><circle cx="8.500" cy="9.500" r="6.500" fill="#ee7b1c"/><path fill="#fff" d="m6.500 5.500 6 4-6 4z"/></svg></button>
  <button class="btn task run" aria-label="Paint"><svg width="24" height="24" viewBox="0 0 24 24"><path fill="#b9dcec" d="M1 15Q2 6 11 4q10-1 11.500 5-1 9-9.500 12.500-4 1.500-4-1.500t-4-2.500Q1 18 1 15z"/><circle cx="5" cy="13.500" r="2" fill="#e0564e"/><circle cx="8.500" cy="9" r="2" fill="#79bd4a"/><circle cx="13.500" cy="7" r="2" fill="#efc52f"/><circle cx="10" cy="15" r="1.500" fill="#333"/><path stroke="#d98232" stroke-width="2.400" d="M12 22.500 20 5"/><path fill="#d9b28a" d="m18 3 2-3 4 1.500L21.500 6z"/></svg></button>
  <button class="btn task" aria-label="Zoom"><svg width="22" height="23" viewBox="0 0 22 23"><rect width="22" height="23" rx="7" fill="#4087fc"/><path fill="#fff" d="M4 7.500h7q2.500 0 2.500 2.500v5.500h-7Q4 15.500 4 13zM14.500 10.500 18 8v7.500l-3.500-2.500z"/></svg></button>
  <button class="btn task front" aria-label="Unity"><svg width="22" height="22"><path fill="#080808" d="M0 0h22v22H0z"/><use href="#unity" x="5" y="5" width="12" height="12"/></svg></button>

  <div class="tray d-flex align-items-center ms-auto">
    <svg class="me-3" width="16" height="16" viewBox="0 0 16 16"><g fill="none" stroke="#fff" stroke-width="1.200"><circle cx="5" cy="8" r="2.300"/><circle cx="10.500" cy="3.500" r="2.500"/><path d="M1 15.500Q1 10.800 5 10.800q3 0 3.500 4M8 8q2-2 4-1.500 3 1 2.500 4.500"/></g></svg>
    <svg width="12" height="8"><path fill="none" stroke="#fff" stroke-width="1.300" d="m1 7 5-5 5 5"/></svg>
    <svg width="16" height="14"><path fill="none" stroke="#fff" d="M5 3.500h9.500v8h-10V9"/><path fill="#fff" d="M7 5h6v5H7zM15 6h1v3h-1zM0 3h5v3L3.500 7.500v3h-2v-3L0 6zM1 1h1v2H1zM3 1h1v2H3z"/></svg>
    <svg class="ms-1" width="14" height="14"><path fill="none" stroke="#888" stroke-width="1.100" d="M1 13Q1.500 2 13 1.500M4 13q.5-8 9-8.500"/><path fill="none" stroke="#fff" stroke-width="1.300" d="M7 13q.5-5 6-5.500"/><circle cx="11.500" cy="11.500" r="1.700" fill="#fff"/></svg>
    <svg width="17" height="14"><path fill="none" stroke="#fff" stroke-width="1.100" d="M.6 4.500h3L7 1.300v11.400L3.600 9.500h-3zM9 4.500q2 2.500 0 5M11 2.500q3.500 4.500 0 9"/><path fill="none" stroke="#888" d="M13.300 1q4 6 0 12"/></svg>
    <div class="clock text-center">16:47<br>23/02/2021</div>
    <div class="notes position-relative ms-2"><svg width="16" height="16"><path fill="#fff" d="M0 0h16v12H9l-3 3v-3H0z"/><path stroke="#333" d="M3 3.500h10M3 6.500h10M3 9.500h6"/></svg><span class="note-count">8</span></div>
    <div class="show-desk"></div>
  </div>
</footer>

<script src="https://cdn.jsdelivr.net/npm/bootstrap@5.3.0/dist/js/bootstrap.bundle.min.js"></script>
</body>
</html>
